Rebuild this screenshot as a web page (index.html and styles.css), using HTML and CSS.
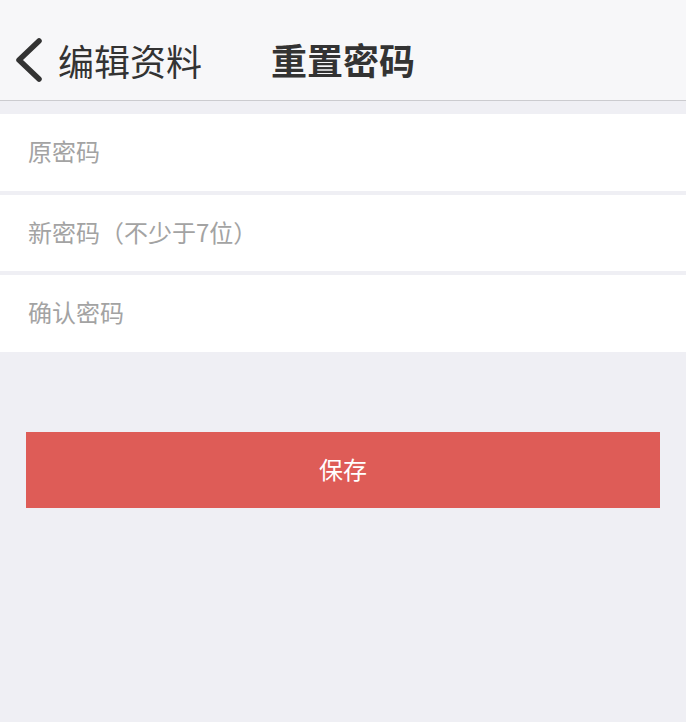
FILE: index.html
```html
<!DOCTYPE html>
<html lang="zh-CN">
<head>
<meta charset="utf-8">
<title>重置密码</title>
<link rel="stylesheet" href="styles.css">
</head>
<body>
<header class="navbar">
  <a class="back" href="#">
    <svg class="back-icon" width="30" height="46" viewBox="0 0 30 46" aria-hidden="true">
      <polyline points="25,4 5,23 25,42" fill="none" stroke="#333" stroke-width="5.5" stroke-linecap="round" stroke-linejoin="round"/>
    </svg>
    <span class="back-text">编辑资料</span>
  </a>
  <h1 class="title">重置密码</h1>
  <div class="spacer"></div>
</header>
<main class="content">
  <form class="form">
    <div class="field"><input type="password" placeholder="原密码"></div>
    <div class="field field-mid"><input type="password" placeholder="新密码（不少于7位）"></div>
    <div class="field"><input type="password" placeholder="确认密码"></div>
  </form>
  <button class="save" type="button">保存</button>
</main>
</body>
</html>
```
FILE: styles.css
```css
* { box-sizing: border-box; }
html, body {
  margin: 0;
  padding: 0;
  background: #efeff4;
  font-family: "Noto Sans CJK SC", "Noto Sans", sans-serif;
}
.navbar {
  display: grid;
  grid-template-columns: 1fr auto 1fr;
  align-items: center;
  height: 101px;
  padding-top: 18px;
  background: #f7f7f9;
  border-bottom: 1px solid #cbcbcf;
}
.back {
  display: flex;
  align-items: center;
  padding-left: 14px;
  padding-top: 2px;
  color: #333;
  text-decoration: none;
}
.back-icon { display: block; flex: none; }
.back-text {
  margin-left: 14px;
  font-size: 36px;
  line-height: 1;
  color: #333;
}
.title {
  margin: 0;
  font-size: 36px;
  font-weight: 700;
  line-height: 1;
  color: #333;
}
.form {
  display: flex;
  flex-direction: column;
  gap: 4px;
  margin-top: 13px;
}
.field {
  height: 77px;
  background: #fff;
  display: flex;
  align-items: center;
  padding-left: 28px;
  padding-bottom: 4px;
}
.field-mid { height: 76px; }
.field input {
  flex: 1;
  border: 0;
  outline: none;
  background: transparent;
  padding: 0;
  font-family: inherit;
  font-size: 24px;
  color: #333;
}
.field input::placeholder { color: #a3a3a3; }
.save {
  display: block;
  width: calc(100% - 52px);
  height: 76px;
  margin: 80px 26px 0;
  padding: 0 0 4px;
  border: 0;
  background: #de5c57;
  color: #fff;
  font-family: inherit;
  font-size: 24px;
}
```
